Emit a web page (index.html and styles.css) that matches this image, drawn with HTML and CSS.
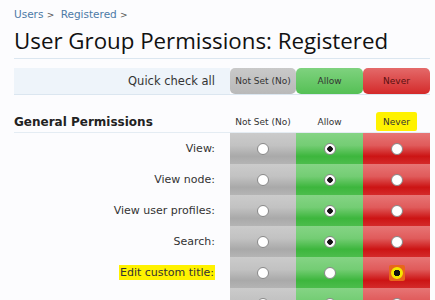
FILE: index.html
```html
<!DOCTYPE html>
<html>

<head>
    <title>User Group Permissions</title>
    <link rel="stylesheet" href="styles.css">
</head>

<body>
    <div class="page">
        <div class="crumbs">
            <a href="#">Users</a> <span class="sep">&gt;</span>
            <a href="#">Registered</a> <span class="sep">&gt;</span>
        </div>
        <h1 class="title">User Group Permissions: Registered</h1>

        <div class="quickRow">
            <div class="quickLabel">Quick check all</div>
            <div class="quickBtn notSet">Not Set (No)</div>
            <div class="quickBtn allow">Allow</div>
            <div class="quickBtn never">Never</div>
        </div>

        <div class="groupHead">
            <div class="groupTitle">General Permissions</div>
            <div class="colHead">Not Set (No)</div>
            <div class="colHead">Allow</div>
            <div class="colHead"><span class="marker">Never</span></div>
        </div>

        <div class="permRow">
            <div class="permLabel">View:</div>
            <div class="cell notSet"><span class="radio"></span></div>
            <div class="cell allow"><span class="radio checked"></span></div>
            <div class="cell never"><span class="radio"></span></div>
        </div>
        <div class="permRow">
            <div class="permLabel">View node:</div>
            <div class="cell notSet"><span class="radio"></span></div>
            <div class="cell allow"><span class="radio checked"></span></div>
            <div class="cell never"><span class="radio"></span></div>
        </div>
        <div class="permRow">
            <div class="permLabel">View user profiles:</div>
            <div class="cell notSet"><span class="radio"></span></div>
            <div class="cell allow"><span class="radio checked"></span></div>
            <div class="cell never"><span class="radio"></span></div>
        </div>
        <div class="permRow">
            <div class="permLabel">Search:</div>
            <div class="cell notSet"><span class="radio"></span></div>
            <div class="cell allow"><span class="radio checked"></span></div>
            <div class="cell never"><span class="radio"></span></div>
        </div>
        <div class="permRow">
            <div class="permLabel"><span class="marker">Edit custom title:</span></div>
            <div class="cell notSet"><span class="radio"></span></div>
            <div class="cell allow"><span class="radio"></span></div>
            <div class="cell never"><span class="focus"><span class="radio hot"></span></span></div>
        </div>
        <div class="permRow">
            <div class="permLabel"></div>
            <div class="cell notSet"><span class="radio"></span></div>
            <div class="cell allow"><span class="radio"></span></div>
            <div class="cell never"><span class="radio"></span></div>
        </div>
    </div>
</body>

</html>
```

FILE: styles.css
```css
body {
    margin: 0;
    background-color: #fcfcfe;
    color: #222;
    font-family: "DejaVu Sans", sans-serif;
    overflow: hidden;
}
.page {
    padding: 8px 5px 0 14px;
}
.crumbs {
    font-size: 10.5px;
    height: 14px;
    color: #555;
}
.crumbs a {
    color: #4d7aa6;
    text-decoration: none;
}
.crumbs .sep {
    font-size: 9px;
    margin-right: 3px;
}
.title {
    margin: 4px 0 0;
    font-family: "Open Sans", sans-serif;
    font-weight: normal;
    font-size: 22.3px;
    line-height: 30px;
    height: 32px;
    color: #111;
    border-bottom: 1px solid #dbe6f0;
}
.quickRow,
.groupHead,
.permRow {
    display: grid;
    grid-template-columns: 216px 66px 67px 67px;
}
.quickRow {
    margin-top: 9px;
    height: 26px;
    border-bottom: 1px solid #dbe6f0;
}
.quickLabel {
    background-color: #eef4fa;
    text-align: right;
    padding-right: 15px;
    font-size: 11.5px;
    line-height: 26px;
    color: #333;
}
.quickBtn {
    border-radius: 5px;
    text-align: center;
    font-size: 9px;
    line-height: 26px;
    color: #333;
}
.quickBtn.notSet {
    background: linear-gradient(#c9c9c9, #b9b9b9);
}
.quickBtn.allow {
    background: linear-gradient(#7fd27f, #55c055);
}
.quickBtn.never {
    background: linear-gradient(#e46a6a, #d42a2a);
    color: #5a1010;
}
.groupHead {
    height: 37px;
    border-bottom: 1px solid #e4ecf3;
}
.groupTitle {
    font-weight: bold;
    font-size: 12px;
    line-height: 20px;
    padding-top: 17px;
    color: #222;
}
.colHead {
    text-align: center;
    font-size: 9px;
    line-height: 20px;
    padding-top: 17px;
    color: #333;
}
.marker {
    background-color: #fff200;
    padding: 1px 1px;
}
.colHead .marker {
    padding: 5px 7px 4px;
    border-radius: 3px 2px 2px 2px;
}
.permRow {
    height: 31px;
}
.permLabel {
    text-align: right;
    padding-right: 15px;
    font-size: 11px;
    line-height: 31px;
    color: #333;
}
.cell {
    display: flex;
    align-items: center;
    justify-content: center;
}
.cell.notSet {
    background: linear-gradient(#cbcbcb 0%, #c2c2c2 40%, #a9a9a9 75%, #b4b4b4 100%);
}
.cell.allow {
    background: linear-gradient(#85d485 0%, #74cd74 40%, #3db63d 75%, #4cbd4c 100%);
}
.cell.never {
    background: linear-gradient(#e77575 0%, #e05b5b 40%, #cc1414 75%, #d42a2a 100%);
}
.radio {
    box-sizing: border-box;
    width: 12px;
    height: 12px;
    border-radius: 50%;
    background-color: #fff;
    border: 1px solid #888;
}
.radio.checked {
    background: radial-gradient(circle, #111 0, #111 2.5px, #fff 3px);
}
.radio.hot {
    border: 2px solid #f5e600;
    background: radial-gradient(circle, #111 0, #111 3px, #f5e600 3.5px);
}
.focus {
    display: flex;
    align-items: center;
    justify-content: center;
    width: 16px;
    height: 16px;
    background-color: #e8661a;
    border-radius: 2px;
}
```
